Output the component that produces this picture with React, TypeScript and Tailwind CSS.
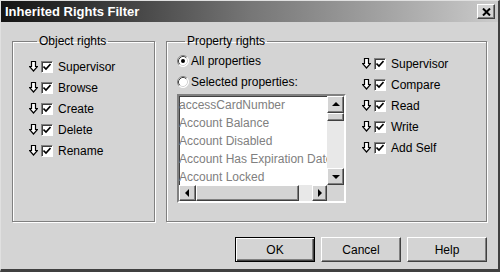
import React from 'react';

const raised = 'border border-t-white border-l-white border-r-[#404040] border-b-[#404040] shadow-[inset_-1px_-1px_0_#808080] bg-[#d4d4d4]';

function DownArrow() {
  return (
    <svg width="9" height="11" viewBox="0 0 9 11" className="shrink-0">
      <path d="M2.5 0.5 H6.5 V5.5 H8.5 L4.5 10 L0.5 5.5 H2.5 Z" fill="#fff" stroke="#000" strokeWidth="1.2" />
    </svg>
  );
}

function Check() {
  return (
    <div className="flex h-[12px] w-[12px] shrink-0 items-center justify-center border border-t-[#808080] border-l-[#808080] border-r-white border-b-white bg-white shadow-[inset_1px_1px_0_#404040]">
      <svg width="8" height="8" viewBox="0 0 8 8">
        <path d="M0.5 3.5 L3 6 L7.5 1" fill="none" stroke="#000" strokeWidth="1.6" />
      </svg>
    </div>
  );
}

function RightRow({ label }: { label: string }) {
  return (
    <div className="flex h-[21px] items-center">
      <DownArrow />
      <div className="ml-[3px]">
        <Check />
      </div>
      <span className="ml-[5px] text-[12px] text-black">{label}</span>
    </div>
  );
}

function Radio({ on, label }: { on?: boolean; label: string }) {
  return (
    <div className="flex h-[21px] items-center">
      <svg width="12" height="12" viewBox="0 0 12 12" className="shrink-0">
        <circle cx="6" cy="6" r="5.5" fill="#fff" />
        <path d="M2.11 9.89 A5.5 5.5 0 0 1 9.89 2.11" fill="none" stroke="#808080" />
        <path d="M9.89 2.11 A5.5 5.5 0 0 1 2.11 9.89" fill="none" stroke="#fff" />
        <path d="M2.82 9.18 A4.5 4.5 0 0 1 9.18 2.82" fill="none" stroke="#404040" />
        <path d="M9.18 2.82 A4.5 4.5 0 0 1 2.82 9.18" fill="none" stroke="#d4d4d4" />
        {on && <circle cx="6" cy="6" r="2" fill="#000" />}
      </svg>
      <span className="ml-[2px] text-[12px] text-black">{label}</span>
    </div>
  );
}

function Tri({ dir }: { dir: 'up' | 'down' | 'left' | 'right' }) {
  const d = {
    up: 'M0 5 L4 1 L8 5 Z',
    down: 'M0 2 L8 2 L4 6 Z',
    left: 'M5 0 L1 4 L5 8 Z',
    right: 'M2 0 L6 4 L2 8 Z',
  }[dir];
  return (
    <svg width="8" height="8" viewBox="0 0 8 8">
      <path d={d} fill="#000" />
    </svg>
  );
}

function ScrollBtn({ dir, className }: { dir: 'up' | 'down' | 'left' | 'right'; className: string }) {
  return (
    <div className={`flex shrink-0 items-center justify-center ${raised} ${className}`}>
      <Tri dir={dir} />
    </div>
  );
}

const props = ['accessCardNumber', 'Account Balance', 'Account Disabled', 'Account Has Expiration Date', 'Account Locked'];
const objectRights = ['Supervisor', 'Browse', 'Create', 'Delete', 'Rename'];
const propertyRights = ['Supervisor', 'Compare', 'Read', 'Write', 'Add Self'];

function Button({ label, isDefault }: { label: string; isDefault?: boolean }) {
  return isDefault ? (
    <button className="h-[25px] w-[80px] border border-black bg-[#d4d4d4] text-[12px] text-black shadow-[inset_1px_1px_0_#fff,inset_-1px_-1px_0_#404040,inset_-2px_-2px_0_#808080]">
      {label}
    </button>
  ) : (
    <button className={`h-[25px] w-[80px] text-[12px] text-black ${raised}`}>{label}</button>
  );
}

export default function App() {
  return (
    <div className="flex h-[272px] w-[500px] flex-col border-t border-l border-t-[#e0e0e0] border-l-[#e0e0e0] border-r-2 border-b-[3px] border-r-[#404040] border-b-[#404040] bg-[#d4d4d4] font-['Liberation_Sans',Arial,sans-serif]">
      <div className="flex h-[21px] shrink-0 items-center justify-between bg-gradient-to-r from-[#141414] via-[#767676] to-[#cbcbcb] pl-[4px] pr-[3px]">
        <span className="text-[13px] font-bold text-white">Inherited Rights Filter</span>
        <div className={`flex h-[15px] w-[18px] items-center justify-center ${raised}`}>
          <svg width="9" height="8" viewBox="0 0 9 8">
            <path d="M1 0.5 L8 7.5 M8 0.5 L1 7.5" stroke="#000" strokeWidth="2" />
          </svg>
        </div>
      </div>

      <div className="flex flex-1 flex-col px-[11px] pt-[12px]">
        <div className="flex h-[188px] gap-[11px]">
          <fieldset className="h-full w-[143px] shrink-0 border border-[#808080] pl-[16px] pt-[8px] shadow-[inset_1px_1px_0_#fff,1px_1px_0_#fff]">
            <legend className="ml-[8px] px-[2px] text-[12px] leading-[14px] text-black">Object rights</legend>
            {objectRights.map((r) => (
              <RightRow key={r} label={r} />
            ))}
          </fieldset>

          <fieldset className="h-full flex-1 border border-[#808080] pl-[10px] pt-[2px] shadow-[inset_1px_1px_0_#fff,1px_1px_0_#fff]">
            <legend className="ml-[8px] px-[2px] text-[12px] leading-[14px] text-black">Property rights</legend>
            <div className="flex gap-[16px]">
              <div className="flex w-[169px] flex-col">
                <Radio on label="All properties" />
                <Radio label="Selected properties:" />
                <div className="mt-[2px] flex h-[109px] flex-col border-2 border-t-[#808080] border-l-[#808080] border-r-white border-b-white bg-white shadow-[inset_1px_1px_0_#404040]">
                  <div className="flex h-[89px]">
                    <div className="flex-1 overflow-hidden">
                      {props.map((p) => (
                        <div key={p} className="h-[18px] whitespace-nowrap text-[12px] leading-[18px] text-[#808080]">
                          {p}
                        </div>
                      ))}
                    </div>
                    <div className="flex w-[17px] flex-col bg-[#e8e8e8]">
                      <ScrollBtn dir="up" className="h-[17px] w-[17px]" />
                      <div className={`h-[8px] w-[17px] ${raised}`} />
                      <div className="flex-1" />
                      <ScrollBtn dir="down" className="h-[17px] w-[17px]" />
                    </div>
                  </div>
                  <div className="flex h-[16px]">
                    <div className="flex flex-1 bg-[#e8e8e8]">
                      <ScrollBtn dir="left" className="h-[16px] w-[17px]" />
                      <div className={`h-[16px] w-[103px] ${raised}`} />
                      <div className="flex-1" />
                      <ScrollBtn dir="right" className="h-[16px] w-[15px]" />
                    </div>
                    <div className="w-[17px] bg-[#d4d4d4]" />
                  </div>
                </div>
              </div>
              <div className="flex flex-col pt-[3px]">
                {propertyRights.map((r) => (
                  <RightRow key={r} label={r} />
                ))}
              </div>
            </div>
          </fieldset>
        </div>

        <div className="mt-[15px] flex justify-end gap-[6px]">
          <Button label="OK" isDefault />
          <Button label="Cancel" />
          <Button label="Help" />
        </div>
      </div>
    </div>
  );
}
